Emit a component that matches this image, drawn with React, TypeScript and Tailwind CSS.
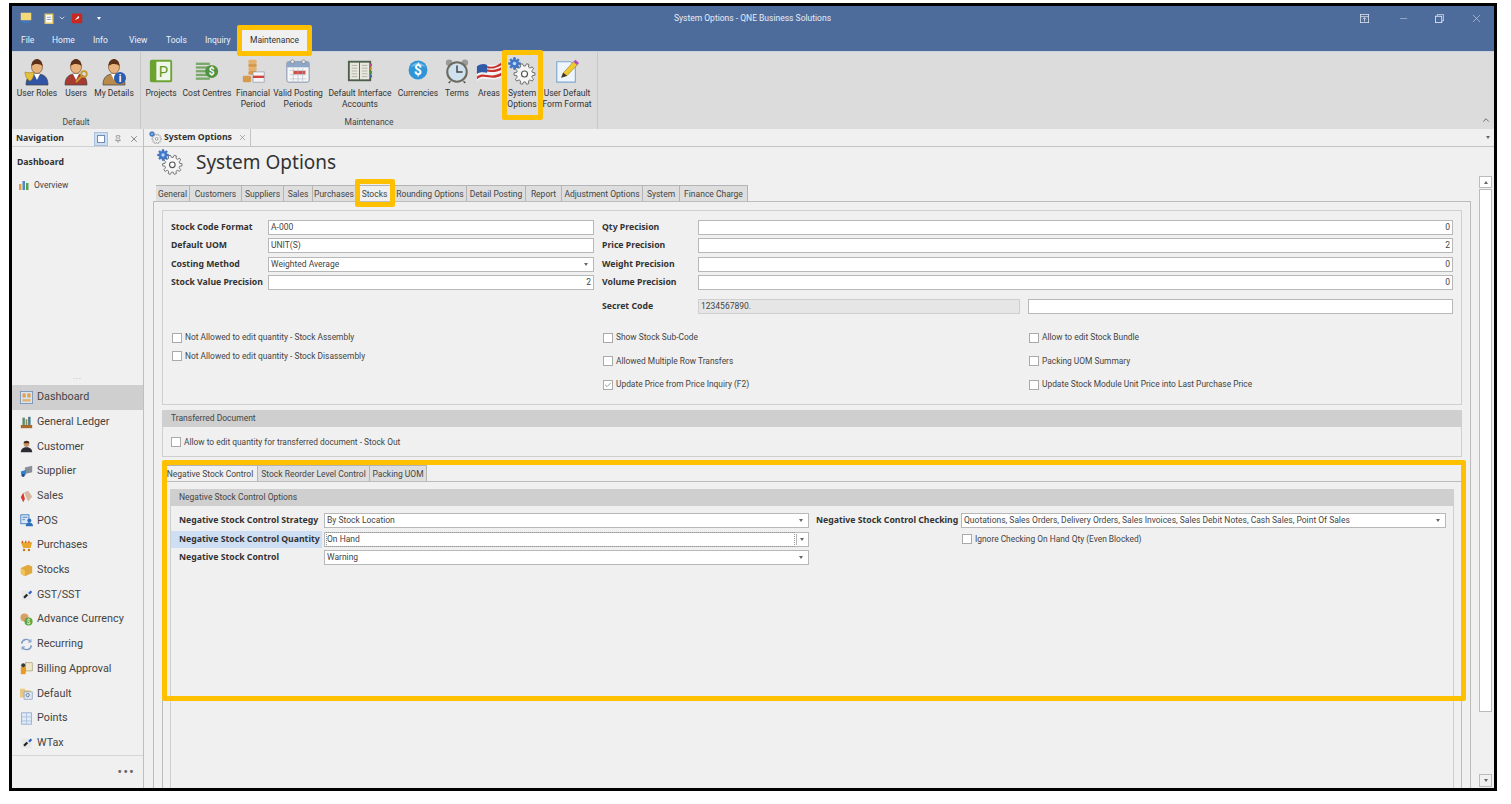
import type { ReactNode } from 'react';
import { ChevronDown, ChevronUp, Minus, Pin, X, Check } from 'lucide-react';

const quickTabs = [
  { label: 'File', cls: 'w-[30px] pl-[9px]' },
  { label: 'Home', cls: 'w-[41px] pl-[10px]' },
  { label: 'Info', cls: 'w-[36px] pl-[10px]' },
  { label: 'View', cls: 'w-[37px] pl-[10px]' },
  { label: 'Tools', cls: 'w-[39px] pl-[10px]' },
  { label: 'Inquiry', cls: 'w-[43px] pl-[10px]' },
];

const mainTabs = [
  { label: 'General', cls: 'w-[34px]' },
  { label: 'Customers', cls: 'w-[52px]' },
  { label: 'Suppliers', cls: 'w-[42px]' },
  { label: 'Sales', cls: 'w-[29px]' },
  { label: 'Purchases', cls: 'w-[43px]' },
  { label: 'Stocks', cls: 'w-[38px]', active: true },
  { label: 'Rounding Options', cls: 'w-[73px]' },
  { label: 'Detail Posting', cls: 'w-[59px]' },
  { label: 'Report', cls: 'w-[36px]' },
  { label: 'Adjustment Options', cls: 'w-[81px]' },
  { label: 'System', cls: 'w-[37px]' },
  { label: 'Finance Charge', cls: 'w-[68px]' },
];

const subTabs = [
  { label: 'Negative Stock Control', cls: 'w-[95px]', active: true },
  { label: 'Stock Reorder Level Control', cls: 'w-[112px]' },
  { label: 'Packing UOM', cls: 'w-[57px]' },
];

// toothed wheel outline, used by the System Options icons
function gearPath(cx: number, cy: number, outer: number, inner: number, teeth: number) {
  const pts: string[] = [];
  const step = (Math.PI * 2) / teeth;
  for (let i = 0; i < teeth; i++) {
    const a = i * step;
    [
      [a - step * 0.32, inner],
      [a - step * 0.18, outer],
      [a + step * 0.18, outer],
      [a + step * 0.32, inner],
    ].forEach(([t, r]) => pts.push(`${(cx + Math.cos(t) * r).toFixed(2)} ${(cy + Math.sin(t) * r).toFixed(2)}`));
  }
  return `M${pts.join('L')}Z`;
}

function Person({ shirt, badge }: { shirt: string; badge?: ReactNode }) {
  return (
    <svg viewBox="0 0 28 28" className="w-[28px] h-[28px]">
      <path d="M3 27c0-8 4-11 11-11s11 3 11 11z" fill={shirt} stroke="#444" strokeWidth="0.7" />
      <path d="M11 16l3 6 3-6z" fill="#fff" />
      <ellipse cx="14" cy="9" rx="5.5" ry="6.5" fill="#e8b27c" stroke="#6a3f1e" strokeWidth="0.6" />
      <path d="M8.500 8c0-5 3-7 5.500-7s5.500 2 5.500 7c-2-2.500-8-3-11 0z" fill="#5e3218" />
      {badge}
    </svg>
  );
}

function GearsIcon({ size }: { size: string }) {
  return (
    <svg viewBox="0 0 28 28" className={size}>
      <path d={gearPath(16.5, 17, 10.5, 8, 10)} fill="#f6f6f6" stroke="#6d6d6d" strokeWidth="1" strokeLinejoin="round" />
      <circle cx="16.500" cy="17" r="3" fill="#fff" stroke="#555" strokeWidth="1.200" />
      <path d={gearPath(6.5, 6.5, 6, 4.2, 8)} fill="#3f78c9" stroke="#2b5ba8" strokeWidth="0.500" />
      <circle cx="6.500" cy="6.500" r="1.800" fill="#bcd6f5" />
    </svg>
  );
}

const ribbonIcons: Record<string, ReactNode> = {
  roles: (
    <Person
      shirt="#2f55a4"
      badge={<path d="M2 14c3 1 6 1 9 0 0 5-2 8-4 9-2-1-5-4-5-9z" fill="#e6c23c" stroke="#8a6d10" strokeWidth="0.5" />}
    />
  ),
  users: (
    <Person
      shirt="#a83a32"
      badge={
        <g stroke="#c99a2c" fill="none" strokeWidth="1.800">
          <circle cx="22" cy="16" r="2.800" />
          <path d="M20 18l-6 6" />
        </g>
      }
    />
  ),
  details: (
    <Person
      shirt="#b98a4a"
      badge={
        <g>
          <circle cx="20" cy="20" r="6" fill="#2a5db0" />
          <text x="20" y="24" fontSize="10" fontWeight="700" textAnchor="middle" fill="#fff">i</text>
        </g>
      }
    />
  ),
  projects: (
    <svg viewBox="0 0 28 28" className="w-[26px] h-[26px]">
      <rect x="2" y="2" width="24" height="24" rx="2" fill="#6aa32f" />
      <rect x="9" y="4" width="15" height="20" fill="#fff" opacity="0.9" />
      <text x="16.500" y="20" fontSize="16" textAnchor="middle" fill="#5d9a28">P</text>
    </svg>
  ),
  cost: (
    <svg viewBox="0 0 28 28" className="w-[26px] h-[26px]">
      <g fill="#7aa86a">
        <rect x="2" y="5" width="15" height="2.500" />
        <rect x="2" y="9" width="15" height="2.500" />
        <rect x="2" y="13" width="13" height="2.500" />
        <rect x="2" y="17" width="13" height="2.500" />
        <rect x="2" y="21" width="15" height="2.500" />
      </g>
      <circle cx="19" cy="14.500" r="7" fill="#4f9440" />
      <text x="19" y="18.500" fontSize="11" fontWeight="700" textAnchor="middle" fill="#fff">$</text>
    </svg>
  ),
  period: (
    <svg viewBox="0 0 28 28" className="w-[26px] h-[26px]">
      <rect x="9" y="2" width="9" height="4" rx="1.500" fill="#e5b06a" />
      <rect x="9" y="6" width="9" height="4" rx="1.500" fill="#d69a4e" />
      <rect x="9" y="10" width="9" height="4" rx="1.500" fill="#e5b06a" />
      <rect x="9" y="14" width="9" height="4" rx="1.500" fill="#d69a4e" />
      <rect x="3" y="19" width="9" height="7" rx="1.500" fill="#d69a4e" />
      <rect x="14" y="15" width="12" height="11" fill="#f4f4f4" stroke="#8891a5" strokeWidth="0.700" />
      <rect x="14" y="19" width="12" height="2.500" fill="#d2413a" />
    </svg>
  ),
  posting: (
    <svg viewBox="0 0 28 28" className="w-[26px] h-[26px]">
      <rect x="2" y="4" width="24" height="22" rx="2" fill="#f6f6f6" stroke="#7c8ba5" />
      <rect x="2" y="4" width="24" height="6" fill="#8ea6c8" />
      <circle cx="8" cy="4" r="2" fill="#e8e8e8" stroke="#667" strokeWidth="0.600" />
      <circle cx="20" cy="4" r="2" fill="#e8e8e8" stroke="#667" strokeWidth="0.600" />
      <rect x="9" y="14" width="13" height="3.500" fill="#d84a44" />
      <path d="M5 13.500h18M5 18h18M5 22.500h18M9 11v14M14 11v14M19 11v14" stroke="#aab3c4" strokeWidth="0.600" />
    </svg>
  ),
  accounts: (
    <svg viewBox="0 0 28 28" className="w-[26px] h-[26px]">
      <rect x="1" y="3" width="25" height="22" fill="#4d5f4a" />
      <rect x="3" y="5" width="10" height="18" fill="#e8e8de" />
      <rect x="14" y="5" width="10" height="18" fill="#e8e8de" />
      <path d="M5 8h6M5 11h6M5 14h6M5 17h6M5 20h6M16 8h6M16 11h6M16 14h6M16 17h6M16 20h6" stroke="#b0b0a4" strokeWidth="1" />
      <path d="M26 6v3" stroke="#d04a9a" strokeWidth="2" />
      <path d="M26 10v3" stroke="#e0a020" strokeWidth="2" />
      <path d="M26 14v3" stroke="#4a9a40" strokeWidth="2" />
      <path d="M26 18v3" stroke="#3a70c0" strokeWidth="2" />
    </svg>
  ),
  currencies: (
    <svg viewBox="0 0 28 28" className="w-[24px] h-[24px]">
      <circle cx="14" cy="14" r="11" fill="#2f95d8" />
      <path d="M5 11a10 9 0 0 1 18 0c-5-3-13-3-18 0z" fill="#6dbbea" />
      <text x="14" y="20" fontSize="16" fontWeight="700" textAnchor="middle" fill="#fff">$</text>
    </svg>
  ),
  terms: (
    <svg viewBox="0 0 28 28" className="w-[26px] h-[26px]">
      <circle cx="5.500" cy="5" r="3.500" fill="#9a9a9a" />
      <circle cx="22.500" cy="5" r="3.500" fill="#9a9a9a" />
      <circle cx="14" cy="15" r="10.500" fill="#cfe0ee" stroke="#6b6b5e" strokeWidth="2.200" />
      <path d="M14 8v7h6" stroke="#444" strokeWidth="1.600" fill="none" />
      <path d="M7 25l-2 2M21 25l2 2" stroke="#555" strokeWidth="1.500" />
    </svg>
  ),
  areas: (
    <svg viewBox="0 0 28 28" className="w-[26px] h-[26px]">
      <path d="M1 9c8-6 14 3 26-4v16c-11 6-18-3-26 4z" fill="#f4f4f4" />
      <path d="M1 14c8-6 14 3 26-4v3c-11 6-18-3-26 4zM1 20c8-6 14 3 26-4v3c-11 6-18-3-26 4zM12 8.500c5 2 10 0 15-3.500v3c-5 3-10 4-15 3z" fill="#c8322c" />
      <path d="M1 9c4-3 8-3 11-1.500v8.500c-4-1-7-1-11 1z" fill="#2e5aa8" />
    </svg>
  ),
  format: (
    <svg viewBox="0 0 28 28" className="w-[26px] h-[26px]">
      <path d="M3 4h15l5 5v17H3z" fill="#eef5fc" stroke="#7fa8d0" strokeWidth="1.200" />
      <path d="M8 21l2-5L21 4l4 3.500L14 19z" fill="#f0c830" stroke="#8a7320" strokeWidth="0.600" />
      <path d="M21 4l2-2 4 3.500-2 2z" fill="#b44ac0" />
      <path d="M8 21l2-5 4 3z" fill="#333" />
    </svg>
  ),
};

const navIcons: Record<string, ReactNode> = {
  Dashboard: (
    <svg viewBox="0 0 16 16" className="w-[13px] h-[13px]">
      <rect x="0.500" y="0.500" width="15" height="15" fill="#d8e4f2" stroke="#6f8db5" />
      <rect x="3" y="3" width="4" height="5" fill="#e2a04a" />
      <rect x="9" y="3" width="4" height="5" fill="#e2a04a" />
      <rect x="3" y="10" width="10" height="3" fill="#e2b36a" />
    </svg>
  ),
  'General Ledger': (
    <svg viewBox="0 0 16 16" className="w-[13px] h-[13px]">
      <rect x="1" y="11" width="14" height="4" fill="#a86a2c" />
      <rect x="3" y="2" width="3" height="9" fill="#5a8a6a" />
      <rect x="7" y="4" width="2" height="7" fill="#8a8a5a" />
      <rect x="10" y="1" width="3" height="10" fill="#4a7a8a" />
    </svg>
  ),
  Customer: (
    <svg viewBox="0 0 16 16" className="w-[13px] h-[13px]">
      <circle cx="8" cy="5" r="3.500" fill="#c99468" />
      <path d="M4.500 4c0-4 7-4 7 0z" fill="#4a2c18" />
      <path d="M1 15c0-4 3-6 7-6s7 2 7 6z" fill="#2c2c34" />
    </svg>
  ),
  Supplier: (
    <svg viewBox="0 0 16 16" className="w-[13px] h-[13px]">
      <path d="M6 3l9-2v8l-9 2z" fill="#8a8f98" />
      <path d="M1 8l6-2v6l-5 2z" fill="#2f7fd0" />
      <circle cx="4" cy="13" r="1.800" fill="#2a4a7a" />
    </svg>
  ),
  Sales: (
    <svg viewBox="0 0 16 16" className="w-[13px] h-[13px]">
      <path d="M5 3l5-2 5 7-5 6z" fill="#d6b9a0" />
      <path d="M1 9l3-6 2 8-2 4z" fill="#d83a2c" />
    </svg>
  ),
  POS: (
    <svg viewBox="0 0 16 16" className="w-[13px] h-[13px]">
      <rect x="1" y="1" width="10" height="11" fill="#dbe7f5" stroke="#2e6fb8" />
      <path d="M3 4h6M3 7h3" stroke="#2e6fb8" />
      <circle cx="11.500" cy="8" r="2.500" fill="#2e6fb8" />
      <path d="M7 15c0-3 2-4.500 4.500-4.500S16 12 16 15z" fill="#2e6fb8" />
    </svg>
  ),
  Purchases: (
    <svg viewBox="0 0 16 16" className="w-[13px] h-[13px]">
      <path d="M1 4h14l-2 7H4z" fill="#e8a62c" />
      <path d="M3 2v3M7 2v3M11 2v3" stroke="#d0571c" strokeWidth="1.500" />
      <circle cx="5" cy="13.500" r="1.500" fill="#c47a18" />
      <circle cx="11" cy="13.500" r="1.500" fill="#c47a18" />
    </svg>
  ),
  Stocks: (
    <svg viewBox="0 0 16 16" className="w-[13px] h-[13px]">
      <path d="M1 5l9-4 5 2v8l-9 4-5-3z" fill="#e3a83c" />
      <path d="M1 5l5 3v7l-5-3z" fill="#f0c560" />
    </svg>
  ),
  'GST/SST': (
    <svg viewBox="0 0 16 16" className="w-[13px] h-[13px]">
      <rect x="2" y="3" width="12" height="12" fill="#e8e8e8" />
      <path d="M4 11l4-4 2 2-4 4z" fill="#222" />
      <path d="M10 6l3-3 2 2-3 3z" fill="#2a62c8" />
    </svg>
  ),
  'Advance Currency': (
    <svg viewBox="0 0 16 16" className="w-[13px] h-[13px]">
      <circle cx="5.500" cy="5.500" r="5" fill="#d9a066" />
      <circle cx="10.500" cy="10.500" r="5" fill="#58a83c" />
      <text x="10.500" y="13.500" fontSize="8" textAnchor="middle" fill="#fff">$</text>
    </svg>
  ),
  Recurring: (
    <svg viewBox="0 0 16 16" className="w-[13px] h-[13px]" fill="none" stroke="#7d9ac8" strokeWidth="1.800">
      <path d="M2 7a6 6 0 0 1 11-2.500M14 9a6 6 0 0 1-11 2.500" />
      <path d="M13.500 1.500v3.500h-3.500M2.500 14.500V11H6" strokeWidth="1.200" />
    </svg>
  ),
  'Billing Approval': (
    <svg viewBox="0 0 16 16" className="w-[13px] h-[13px]">
      <rect x="1" y="6" width="6" height="9" fill="#e89a24" />
      <rect x="7" y="1" width="8" height="10" fill="#efe7c8" stroke="#8a7a40" strokeWidth="0.600" />
      <circle cx="4" cy="4" r="2.500" fill="#3a3a3a" />
    </svg>
  ),
  Default: (
    <svg viewBox="0 0 16 16" className="w-[13px] h-[13px]">
      <path d="M0 2h6l1 2h6v9H0z" fill="#e8c882" />
      <rect x="5" y="6" width="10" height="9" fill="#dfe6f0" stroke="#7088a8" strokeWidth="0.700" />
      <circle cx="9.500" cy="10" r="2" fill="none" stroke="#54709a" />
    </svg>
  ),
  Points: (
    <svg viewBox="0 0 16 16" className="w-[13px] h-[13px]">
      <rect x="2" y="1" width="12" height="14" fill="#e2eaf6" stroke="#8ba4cc" />
      <path d="M8 1v14M2 6h12M2 11h12" stroke="#a8bcdc" />
    </svg>
  ),
  WTax: (
    <svg viewBox="0 0 16 16" className="w-[13px] h-[13px]">
      <rect x="2" y="3" width="12" height="12" fill="#e8e8e8" />
      <path d="M4 11l4-4 2 2-4 4z" fill="#222" />
      <path d="M10 6l3-3 2 2-3 3z" fill="#2a62c8" />
    </svg>
  ),
};

const navItems = Object.keys(navIcons);

function RibbonButton({ icon, lines, cls }: { icon: string; lines: string[]; cls: string }) {
  return (
    <div className={`${cls} flex flex-col items-center text-[8.5px] leading-[11px] text-[#333]`}>
      <div className="h-[36px] pt-[6px] flex items-start justify-center">{ribbonIcons[icon]}</div>
      <span className="whitespace-nowrap">{lines[0]}</span>
      {lines[1] && <span className="whitespace-nowrap">{lines[1]}</span>}
    </div>
  );
}

function TabStrip({ tabs }: { tabs: { label: string; cls: string; active?: boolean }[] }) {
  return (
    <div className="flex">
      {tabs.map(t => (
        <div
          key={t.label}
          className={`${t.cls} h-[16px] pt-[1px] flex items-center justify-center whitespace-nowrap text-[8.5px] text-[#444] border-t border-r border-[#b4b4b4] ${
            t.active ? 'bg-[#f0f0f0]' : 'bg-[#dedede]'
          }`}
        >
          {t.label}
        </div>
      ))}
    </div>
  );
}

function Caret() {
  return <span className="w-0 h-0 border-x-[2.500px] border-x-transparent border-t-[3px] border-t-[#666]" />;
}

function Input({ value, right, combo, grey, focus }: { value?: string; right?: boolean; combo?: boolean; grey?: boolean; focus?: boolean }) {
  return (
    <div
      className={`flex-1 h-[15px] flex items-center px-[2px] text-[8.5px] text-[#444] border ${
        grey ? 'bg-[#e6e6e6] border-[#cfcfcf]' : 'bg-white border-[#b8b8b8]'
      } ${right ? 'justify-end' : 'justify-between'}`}
    >
      <span className={focus ? 'outline-1 outline-dotted outline-[#999] w-[467px]' : ''}>{value}</span>
      {combo && (
        <span className={`flex items-center justify-center w-[10px] h-[11px] ${focus ? 'border-l border-[#b8b8b8]' : ''}`}>
          <Caret />
        </span>
      )}
    </div>
  );
}

function Field({ label, labelCls, focus, children }: { label: string; labelCls: string; focus?: boolean; children: ReactNode }) {
  return (
    <div className="flex items-center h-[18.500px]">
      <span
        className={`${labelCls} font-['Noto_Sans',sans-serif] text-[8.7px] font-bold text-[#333] whitespace-nowrap flex items-center ${
          focus ? 'bg-[#cfdff3] h-[17px]' : 'h-[15px]'
        }`}
      >
        {label}
      </span>
      {children}
    </div>
  );
}

function CheckRow({ label, checked, cls }: { label: string; checked?: boolean; cls: string }) {
  return (
    <div className={`flex items-center gap-[3px] text-[8.400px] text-[#444] whitespace-nowrap ${cls}`}>
      <span className="w-[10px] h-[10px] border border-[#aaa] bg-white flex items-center justify-center">
        {checked && <Check className="w-[8px] h-[8px] text-[#666]" strokeWidth={2} />}
      </span>
      {label}
    </div>
  );
}

export default function App() {
  return (
    <div className="relative w-[1511px] h-[804px] bg-white overflow-hidden font-['Roboto',sans-serif]">
      <div className="ml-[9px] mt-[3px] w-[1488px] h-[788px] border-[3px] border-black flex flex-col bg-[#f0f0f0]">
        {/* title bar */}
        <div className="h-[45px] bg-[#4d6b9b] text-white flex flex-col shrink-0">
          <div className="h-[24px] flex items-center relative">
            <div className="flex items-center pl-[8px] gap-[3px]">
              <svg viewBox="0 0 16 16" className="w-[12px] h-[12px]">
                <rect x="1" y="1" width="14" height="10" fill="#f4d97a" />
                <rect x="3" y="12" width="10" height="3" fill="#3d7ac0" />
              </svg>
              <svg viewBox="0 0 16 16" className="w-[12px] h-[12px] ml-[8px]">
                <rect x="2" y="2" width="12" height="14" fill="#e6c66a" />
                <rect x="4" y="4" width="8" height="10" fill="#fff" />
                <path d="M5 7h6M5 10h6" stroke="#6a8ab5" />
              </svg>
              <ChevronDown className="w-[8px] h-[8px]" />
              <svg viewBox="0 0 16 16" className="w-[12px] h-[12px] ml-[2px]">
                <rect x="1" y="2" width="14" height="13" rx="2" fill="#c8281e" />
                <path d="M5 11l5-6 1 3z" fill="#fff" />
              </svg>
              <span className="ml-[11px] w-0 h-0 border-x-[2.500px] border-x-transparent border-t-[3px] border-t-white" />
            </div>
            <span className="flex-1 text-center text-[8.5px] text-[#e8edf5] pl-[44px]">System Options - QNE Business Solutions</span>
            <div className="flex items-center text-[#e4e9f2]">
              <svg viewBox="0 0 12 12" className="w-[9px] h-[9px]" fill="none" stroke="currentColor">
                <rect x="0.500" y="0.500" width="11" height="11" />
                <path d="M0.500 3.500h11M6 5v5M4 7l2-2 2 2" />
              </svg>
              <Minus className="w-[11px] h-[11px] ml-[29px]" strokeWidth={1} />
              <svg viewBox="0 0 12 12" className="w-[9px] h-[9px] ml-[26px]" fill="none" stroke="currentColor">
                <rect x="0.500" y="3" width="8.500" height="8.500" strokeWidth="1.200" />
                <path d="M3 3V0.500h8.500V9H9" />
              </svg>
              <X className="w-[13px] h-[13px] ml-[26px] mr-[11px]" strokeWidth={1} />
            </div>
          </div>
          <div className="flex-1 flex items-center text-[8.5px] text-[#eef2f8]">
            {quickTabs.map(t => (
              <span key={t.label} className={t.cls}>{t.label}</span>
            ))}
            <span className="ml-[1px] h-full w-[71px] flex items-center justify-center bg-[#f0f0f0] text-[#333]">Maintenance</span>
          </div>
        </div>

        {/* ribbon */}
        <div className="h-[78px] bg-[#dcdcdc] border-t border-[#c9d2e0] flex shrink-0 relative">
          <div className="w-[129px] border-r border-[#c8c8c8] flex flex-col">
            <div className="flex flex-1 pl-[3px]">
              <RibbonButton icon="roles" lines={['User Roles']} cls="w-[44px]" />
              <RibbonButton icon="users" lines={['Users']} cls="w-[34px]" />
              <RibbonButton icon="details" lines={['My Details']} cls="w-[42px]" />
            </div>
            <div className="h-[13px] text-center text-[8.5px] text-[#444]">Default</div>
          </div>
          <div className="w-[457px] border-r border-[#c8c8c8] flex flex-col">
            <div className="flex flex-1 pl-[2px]">
              <RibbonButton icon="projects" lines={['Projects']} cls="w-[36px]" />
              <RibbonButton icon="cost" lines={['Cost Centres']} cls="w-[56px]" />
              <RibbonButton icon="period" lines={['Financial', 'Period']} cls="w-[36px]" />
              <RibbonButton icon="posting" lines={['Valid Posting', 'Periods']} cls="w-[54px]" />
              <RibbonButton icon="accounts" lines={['Default Interface', 'Accounts']} cls="w-[70px]" />
              <RibbonButton icon="currencies" lines={['Currencies']} cls="w-[46px]" />
              <RibbonButton icon="terms" lines={['Terms']} cls="w-[32px]" />
              <RibbonButton icon="areas" lines={['Areas']} cls="w-[32px]" />
              <div className="w-[34px] flex flex-col items-center text-[8.5px] leading-[11px] text-[#333]">
                <div className="h-[36px] pt-[5px]"><GearsIcon size="w-[28px] h-[28px]" /></div>
                <span>System</span>
                <span>Options</span>
              </div>
              <RibbonButton icon="format" lines={['User Default', 'Form Format']} cls="w-[56px]" />
            </div>
            <div className="h-[13px] text-center text-[8.5px] text-[#444]">Maintenance</div>
          </div>
          <div className="flex-1 flex items-end justify-end pr-[3px] pb-[4px]">
            <ChevronUp className="w-[10px] h-[10px] text-[#555]" />
          </div>
        </div>

        <div className="flex-1 flex min-h-0">
          {/* navigation */}
          <div className="w-[132px] shrink-0 border-r border-[#bfbfbf] flex flex-col">
            <div className="h-[18px] flex items-center pl-[4px] pt-[3px] border-b border-[#d0d0d0] font-['Noto_Sans',sans-serif] text-[8.7px] font-bold text-[#333]">
              <span className="flex-1">Navigation</span>
              <span className="w-[14px] h-[14px] bg-[#cddcf0] border border-[#a9c0de] flex items-center justify-center">
                <span className="w-[8px] h-[8px] bg-white border border-[#6f8db5]" />
              </span>
              <Pin className="w-[8px] h-[8px] ml-[6px] text-[#777]" />
              <X className="w-[10px] h-[10px] ml-[7px] mr-[4px] text-[#777]" />
            </div>
            <div className="h-[221px] pl-[5px] text-[8.5px] text-[#444]">
              <div className="font-['Noto_Sans',sans-serif] font-bold text-[8.7px] text-[#333] pt-[9px]">Dashboard</div>
              <div className="flex items-center gap-[4px] mt-[10px]">
                <svg viewBox="0 0 12 12" className="w-[12px] h-[12px] ml-[1px]">
                  <rect x="1" y="5" width="2.500" height="6" fill="#e2a13a" />
                  <rect x="4.500" y="2" width="2.500" height="9" fill="#4e8ac8" />
                  <rect x="8" y="4" width="2.500" height="7" fill="#5fa04a" />
                </svg>
                Overview
              </div>
            </div>
            <div className="h-[17px] pt-[2px] flex items-center justify-center text-[7px] text-[#999] tracking-[1px]">...</div>
            {navItems.map(item => (
              <div
                key={item}
                className={`h-[24.700px] shrink-0 flex items-center pl-[8px] gap-[4px] text-[10.800px] text-[#444] whitespace-nowrap ${
                  item === 'Dashboard' ? 'bg-[#cfcfcf]' : ''
                }`}
              >
                {navIcons[item]}
                {item}
              </div>
            ))}
            <div className="flex-1 border-t border-[#d6d6d6] flex items-center justify-end pr-[8px] text-[#666] text-[12px] font-bold tracking-[1.500px]">
              •••
            </div>
          </div>

          {/* content */}
          <div className="flex-1 flex flex-col min-w-0">
            <div className="h-[18px] flex shrink-0 border-b border-[#c4c4c4]">
              <div className="ml-[2px] w-[105px] flex items-center gap-[2px] pl-[3px] border-r border-[#c4c4c4] font-['Noto_Sans',sans-serif] text-[8.7px] font-bold text-[#333] whitespace-nowrap">
                <GearsIcon size="w-[13px] h-[13px]" />
                System Options
                <X className="w-[9px] h-[9px] ml-[4px] text-[#777]" strokeWidth={1.500} />
              </div>
              <div className="flex-1 flex items-center justify-end pr-[4px]">
                <Caret />
              </div>
            </div>

            <div className="flex-1 flex min-h-0">
              <div className="w-[1327px] flex flex-col pl-[9px] min-h-0 overflow-hidden">
                <div className="h-[38px] shrink-0 flex items-start">
                  <div className="pt-[2px] pl-[4px]"><GearsIcon size="w-[26px] h-[26px]" /></div>
                  <span className="ml-[13px] font-['Noto_Sans',sans-serif] text-[19px] leading-[30px] text-[#333]">System Options</span>
                </div>
                <div className="pl-[3px] shrink-0">
                  <TabStrip tabs={mainTabs} />
                </div>
                <div className="flex-1 min-h-0 border-l border-t border-r border-[#bcbcbc] px-[8px] pt-[8px] flex flex-col">
                  {/* stock settings */}
                  <div className="h-[195px] shrink-0 border border-[#cfcfcf] pl-[8px] pt-[7px]">
                    <div className="flex">
                      <div className="w-[423px]">
                        <Field label="Stock Code Format" labelCls="w-[97px]"><Input value="A-000" /></Field>
                        <Field label="Default UOM" labelCls="w-[97px]"><Input value="UNIT(S)" /></Field>
                        <Field label="Costing Method" labelCls="w-[97px]"><Input value="Weighted Average" combo /></Field>
                        <Field label="Stock Value Precision" labelCls="w-[97px]"><Input value="2" right /></Field>
                      </div>
                      <div className="w-[851px] ml-[8px]">
                        <Field label="Qty Precision" labelCls="w-[96px]"><Input value="0" right /></Field>
                        <Field label="Price Precision" labelCls="w-[96px]"><Input value="2" right /></Field>
                        <Field label="Weight Precision" labelCls="w-[96px]"><Input value="0" right /></Field>
                        <Field label="Volume Precision" labelCls="w-[96px]"><Input value="0" right /></Field>
                        <div className="mt-[5px]">
                          <Field label="Secret Code" labelCls="w-[96px]">
                            <Input value="1234567890." grey />
                            <span className="w-[8px]" />
                            <div className="w-[425px] h-[15px] bg-white border border-[#b8b8b8]" />
                          </Field>
                        </div>
                      </div>
                    </div>
                    <div className="flex mt-[17px] pl-[1px]">
                      <div className="w-[431px] flex flex-col gap-[8.500px]">
                        <CheckRow label="Not Allowed to edit quantity - Stock Assembly" cls="h-[10px]" />
                        <CheckRow label="Not Allowed to edit quantity - Stock Disassembly" cls="h-[10px]" />
                      </div>
                      <div className="w-[426px] flex flex-col gap-[13.500px]">
                        <CheckRow label="Show Stock Sub-Code" cls="h-[10px]" />
                        <CheckRow label="Allowed Multiple Row Transfers" cls="h-[10px]" />
                        <CheckRow label="Update Price from Price Inquiry (F2)" checked cls="h-[10px]" />
                      </div>
                      <div className="flex flex-col gap-[13.500px]">
                        <CheckRow label="Allow to edit Stock Bundle" cls="h-[10px]" />
                        <CheckRow label="Packing UOM Summary" cls="h-[10px]" />
                        <CheckRow label="Update Stock Module Unit Price into Last Purchase Price" cls="h-[10px]" />
                      </div>
                    </div>
                  </div>

                  {/* transferred document */}
                  <div className="mt-[5px] h-[47px] shrink-0 border-x border-b border-[#cfcfcf]">
                    <div className="h-[17px] bg-[#cfcfcf] flex items-center pl-[8px] text-[8.5px] text-[#444]">Transferred Document</div>
                    <div className="pl-[8px] pt-[10px]">
                      <CheckRow label="Allow to edit quantity for transferred document - Stock Out" cls="h-[10px]" />
                    </div>
                  </div>

                  {/* lower tabs */}
                  <div className="mt-[8px] shrink-0 pl-[1px]">
                    <TabStrip tabs={subTabs} />
                  </div>
                  <div className="flex-1 min-h-0 border-l border-t border-r border-[#bcbcbc] px-[7px] pt-[7px] flex flex-col">
                    <div className="flex-1 border-x border-[#cfcfcf]">
                      <div className="h-[17px] bg-[#cfcfcf] flex items-center pl-[8px] text-[8.5px] text-[#444]">Negative Stock Control Options</div>
                      <div className="flex pl-[8px] pt-[5.500px]">
                        <div className="w-[630px]">
                          <Field label="Negative Stock Control Strategy" labelCls="w-[145px]"><Input value="By Stock Location" combo /></Field>
                          <Field label="Negative Stock Control Quantity" labelCls="w-[151px] -ml-[8px] pl-[8px] mr-[2px]" focus><Input value="On Hand" combo focus /></Field>
                          <Field label="Negative Stock Control" labelCls="w-[145px]"><Input value="Warning" combo /></Field>
                        </div>
                        <div className="w-[630px] ml-[7px]">
                          <Field label="Negative Stock Control Checking" labelCls="w-[145px]">
                            <Input value="Quotations, Sales Orders, Delivery Orders, Sales Invoices, Sales Debit Notes, Cash Sales, Point Of Sales" combo />
                          </Field>
                          <div className="pl-[146px] h-[18.500px] flex items-center">
                            <CheckRow label="Ignore Checking On Hand Qty (Even Blocked)" cls="h-[10px]" />
                          </div>
                        </div>
                      </div>
                    </div>
                  </div>
                </div>
              </div>

              {/* scrollbar */}
              <div className="flex-1 flex flex-col pl-[8px] pr-[2px] pt-[29px] pb-[1px] min-w-0">
                <div className="h-[12px] border border-[#bbb] bg-white flex items-center justify-center">
                  <span className="w-0 h-0 border-x-[2.500px] border-x-transparent border-b-[3px] border-b-[#666]" />
                </div>
                <div className="h-[523px] border border-[#bbb] bg-white mt-[1px]" />
                <div className="flex-1" />
                <div className="h-[13px] border border-[#bbb] flex items-center justify-center">
                  <Caret />
                </div>
              </div>
            </div>
          </div>
        </div>
      </div>

      {/* annotation boxes drawn over the screenshot */}
      <div className="absolute left-[237px] top-[25px] w-[75px] h-[31px] border-[5px] border-[#ffc000] rounded-[2px]" />
      <div className="absolute left-[502px] top-[50px] w-[41px] h-[70px] border-[5px] border-[#ffc000] rounded-[2px]" />
      <div className="absolute left-[355px] top-[179px] w-[40px] h-[28px] border-[5px] border-[#ffc000] rounded-[2px]" />
      <div className="absolute left-[162px] top-[460px] w-[1304px] h-[241px] border-[5px] border-[#ffc000] rounded-[2px]" />
    </div>
  );
}
